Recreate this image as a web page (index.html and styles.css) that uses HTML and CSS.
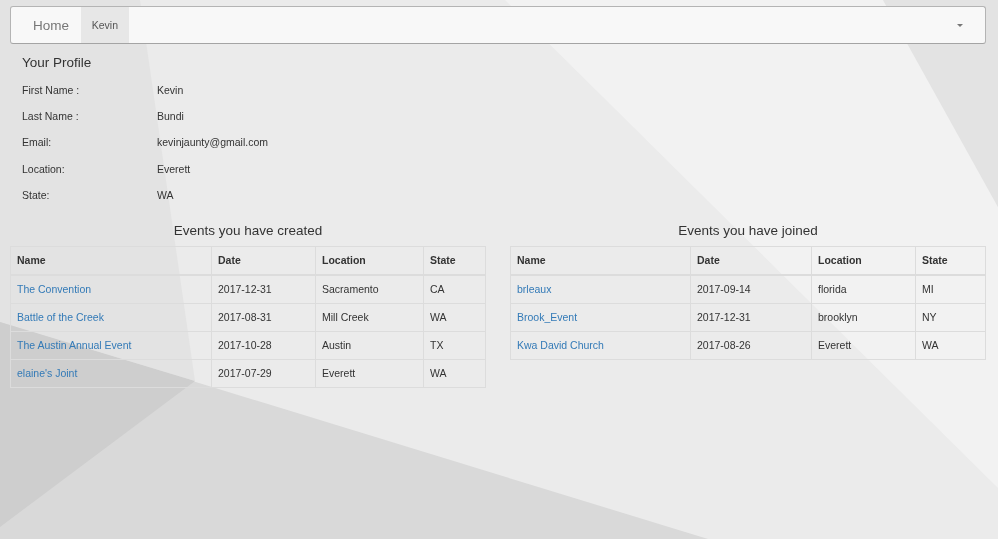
FILE: index.html
```html
<!DOCTYPE html>
<html lang="en">
<head>
<meta charset="utf-8">
<title>Your Profile</title>
<link rel="stylesheet" href="styles.css">
</head>
<body>
<svg class="backdrop" viewBox="0 0 998 539" preserveAspectRatio="none" aria-hidden="true">
  <rect x="0" y="0" width="998" height="539" fill="#ebebeb"/>
  <polygon points="0,0 140,0 195,381 0,322" fill="#e3e3e3"/>
  <polygon points="505,0 883,0 998,207 998,488" fill="#f2f2f2"/>
  <polygon points="883,0 998,0 998,207" fill="#e3e3e3"/>
  <polygon points="0,322 708,539 0,539" fill="#d9d9d9"/>
  <polygon points="0,322 195,381 0,527" fill="#cecece"/>
</svg>

<nav class="navbar">
  <a class="brand" href="#">Home</a>
  <ul class="nav">
    <li class="nav-item active"><a href="#">Kevin</a></li>
  </ul>
  <span class="spacer"></span>
  <a class="dropdown-toggle" href="#"><span class="caret"></span></a>
</nav>

<main class="page">
  <section class="profile">
    <h4 class="title">Your Profile</h4>
    <div class="row"><span class="label">First Name :</span><span class="value">Kevin</span></div>
    <div class="row"><span class="label">Last Name :</span><span class="value">Bundi</span></div>
    <div class="row"><span class="label">Email:</span><span class="value">kevinjaunty@gmail.com</span></div>
    <div class="row"><span class="label">Location:</span><span class="value">Everett</span></div>
    <div class="row"><span class="label">State:</span><span class="value">WA</span></div>
  </section>

  <section class="events">
    <div class="col">
      <h4 class="col-title">Events you have created</h4>
      <table class="grid">
        <colgroup>
          <col class="c-name-a"><col class="c-date-a"><col class="c-loc-a"><col>
        </colgroup>
        <thead>
          <tr><th>Name</th><th>Date</th><th>Location</th><th>State</th></tr>
        </thead>
        <tbody>
          <tr><td><a href="#">The Convention</a></td><td>2017-12-31</td><td>Sacramento</td><td>CA</td></tr>
          <tr><td><a href="#">Battle of the Creek</a></td><td>2017-08-31</td><td>Mill Creek</td><td>WA</td></tr>
          <tr><td><a href="#">The Austin Annual Event</a></td><td>2017-10-28</td><td>Austin</td><td>TX</td></tr>
          <tr><td><a href="#">elaine's Joint</a></td><td>2017-07-29</td><td>Everett</td><td>WA</td></tr>
        </tbody>
      </table>
    </div>
    <div class="col">
      <h4 class="col-title">Events you have joined</h4>
      <table class="grid">
        <colgroup>
          <col class="c-name-b"><col class="c-date-b"><col class="c-loc-b"><col>
        </colgroup>
        <thead>
          <tr><th>Name</th><th>Date</th><th>Location</th><th>State</th></tr>
        </thead>
        <tbody>
          <tr><td><a href="#">brleaux</a></td><td>2017-09-14</td><td>florida</td><td>MI</td></tr>
          <tr><td><a href="#">Brook_Event</a></td><td>2017-12-31</td><td>brooklyn</td><td>NY</td></tr>
          <tr><td><a href="#">Kwa David Church</a></td><td>2017-08-26</td><td>Everett</td><td>WA</td></tr>
        </tbody>
      </table>
    </div>
  </section>
</main>
</body>
</html>
```
FILE: styles.css
```css
html, body {
  margin: 0;
  padding: 0;
  height: 100%;
}

body {
  font-family: "Liberation Sans", Arial, Helvetica, sans-serif;
  font-size: 10.5px;
  line-height: 15px;
  color: #333;
  overflow: hidden;
}

.backdrop {
  position: fixed;
  left: 0;
  top: 0;
  width: 100%;
  height: 100%;
  z-index: -1;
}

a {
  color: #337ab7;
  text-decoration: none;
}

/* navbar */
.navbar {
  display: flex;
  align-items: stretch;
  box-sizing: border-box;
  width: 976px;
  height: 38px;
  margin: 6px 0 0 10px;
  background: #f8f8f8;
  border: 1px solid #b4b4b4;
  border-bottom-color: #a4a4a4;
  border-radius: 3px;
}

.brand {
  display: flex;
  align-items: center;
  padding: 0 11.5px 0 22px;
  font-size: 13.5px;
  color: #777;
}

.nav {
  display: flex;
  list-style: none;
  margin: 0;
  padding: 0;
}

.nav-item a {
  display: flex;
  align-items: center;
  height: 100%;
  padding: 0 11.25px;
  color: #555;
}

.nav-item.active a {
  background: #e7e7e7;
}

.spacer {
  flex: 1;
}

.dropdown-toggle {
  display: flex;
  align-items: center;
  padding: 0 22px 0 11px;
}

.caret {
  display: block;
  width: 0;
  height: 0;
  border-top: 3px solid #777;
  border-left: 3px solid transparent;
  border-right: 3px solid transparent;
  margin-top: 1px;
}

/* page */
.page {
  width: 976px;
  margin-left: 10px;
}

.profile {
  padding-left: 12px;
}

.title,
.col-title {
  font-size: 13.5px;
  line-height: 15px;
  font-weight: normal;
  color: #333;
}

.title {
  margin: 10.5px 0 7.5px;
}

.row {
  display: flex;
  align-items: center;
  height: 26.4px;
}

.label {
  width: 135px;
}

.events {
  display: grid;
  grid-template-columns: 476px 476px;
  column-gap: 24px;
  margin-top: 14px;
}

.col-title {
  text-align: center;
  margin: 0 0 8px;
}

.grid {
  width: 100%;
  border-collapse: collapse;
  border: 1px solid #dcdcdc;
}

.grid th,
.grid td {
  border: 1px solid #dcdcdc;
  padding: 6px;
  text-align: left;
  line-height: 15px;
  vertical-align: top;
}

.grid th {
  font-weight: bold;
  color: #333;
  border-bottom-width: 2px;
}

.c-name-a { width: 201px; }
.c-date-a { width: 104px; }
.c-loc-a  { width: 108px; }

.c-name-b { width: 180px; }
.c-date-b { width: 121px; }
.c-loc-b  { width: 104px; }
```
